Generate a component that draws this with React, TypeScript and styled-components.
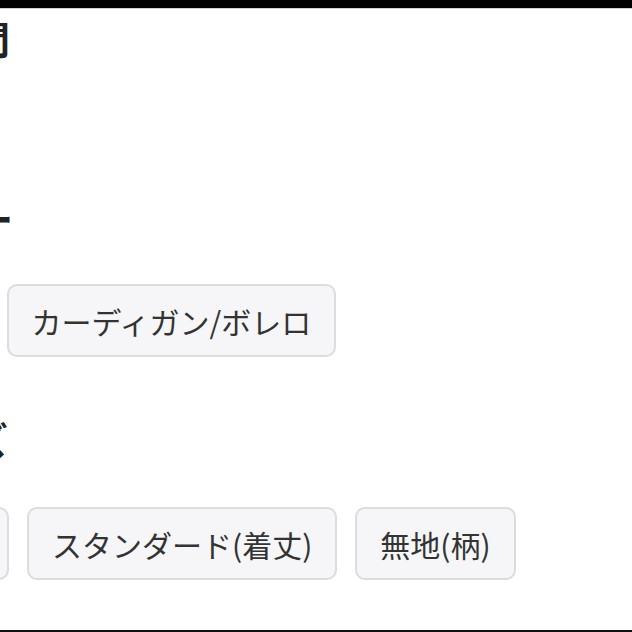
import React from "react";
import styled, { createGlobalStyle } from "styled-components";

const GlobalStyle = createGlobalStyle`
  html, body {
    margin: 0;
    padding: 0;
    background: #ffffff;
  }
  body {
    font-family: "Noto Sans CJK JP", "Noto Sans", sans-serif;
    color: #333333;
  }
`;

const Screen = styled.div`
  width: 632px;
  height: 632px;
  overflow: hidden;
  display: flex;
  flex-direction: column;
  background: #ffffff;
  border-bottom: 2px solid #111111;
  box-sizing: border-box;
`;

const TopBar = styled.div`
  height: 8px;
  flex: none;
  background: #000000;
  border-bottom: 1px solid #cfcfcf;
`;

const Content = styled.main`
  display: flex;
  flex-direction: column;
  padding-top: 3px;
`;

const Section = styled.section<{ $gap: number; $gapAfter: number }>`
  display: flex;
  flex-direction: column;
  gap: ${(p) => p.$gap}px;
  margin-bottom: ${(p) => p.$gapAfter}px;
`;

const Heading = styled.h2<{ $shift: number }>`
  margin: 0 0 0 ${(p) => p.$shift}px;
  font-size: 38px;
  line-height: 52px;
  font-weight: 700;
  color: #222222;
  white-space: nowrap;
`;

const ChipRow = styled.div<{ $shift: number }>`
  display: flex;
  gap: 18px;
  margin-left: ${(p) => p.$shift}px;
`;

const Chip = styled.button`
  flex: none;
  height: 73px;
  padding: 0 23px;
  box-sizing: border-box;
  border: 2px solid #dcdcdc;
  border-radius: 10px;
  background: #f6f6f8;
  color: #333333;
  font-family: "Noto Sans CJK JP", "Noto Sans", sans-serif;
  font-size: 30px;
  line-height: 1;
  white-space: nowrap;
`;

export default function App() {
  return (
    <>
      <GlobalStyle />
      <Screen>
        <TopBar />
        <Content>
          <Section $gap={40} $gapAfter={128}>
            <Heading $shift={-66}>期間</Heading>
          </Section>
          <Section $gap={40} $gapAfter={56}>
            <Heading $shift={-177}>カテゴリー</Heading>
            <ChipRow $shift={-210}>
              <Chip>ジャケット</Chip>
              <Chip>カーディガン/ボレロ</Chip>
            </ChipRow>
          </Section>
          <Section $gap={42} $gapAfter={0}>
            <Heading $shift={-105}>サイズ</Heading>
            <ChipRow $shift={-131}>
              <Chip>ロング</Chip>
              <Chip>スタンダード(着丈)</Chip>
              <Chip>無地(柄)</Chip>
            </ChipRow>
          </Section>
        </Content>
      </Screen>
    </>
  );
}
